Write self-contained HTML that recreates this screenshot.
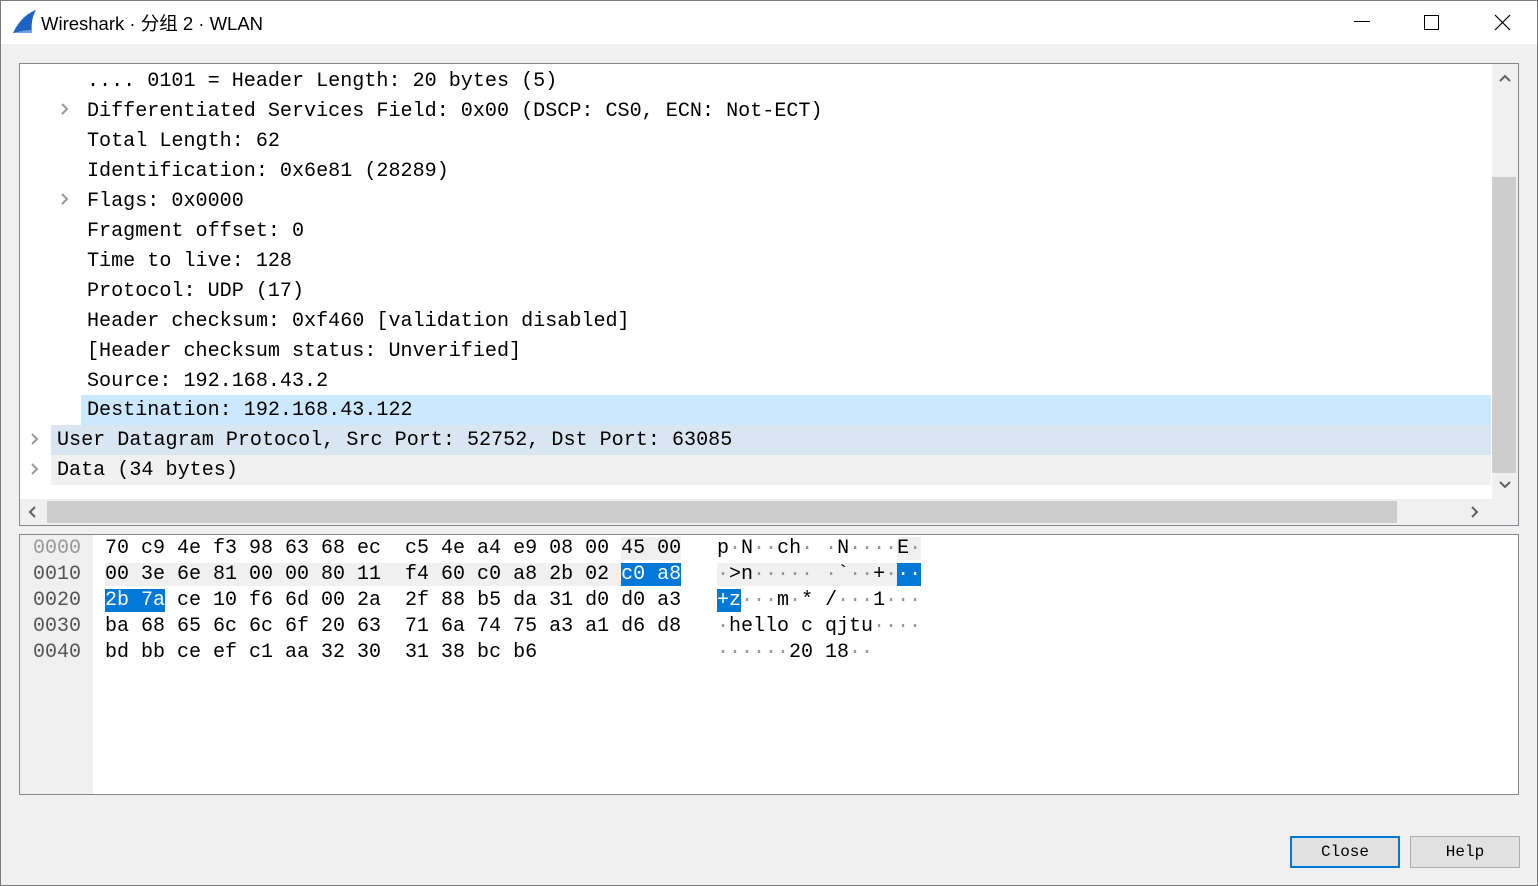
<!DOCTYPE html>
<html><head><meta charset="utf-8"><style>
*{margin:0;padding:0;box-sizing:border-box}
body{width:1538px;height:886px;background:#f0f0f0;position:relative;overflow:hidden;font-family:"Liberation Mono",monospace;box-shadow:inset 0 0 0 1px #7a7a7a}
.abs{position:absolute}
.title{left:1px;top:1px;width:1536px;height:43px;background:#fff}
.tt{left:41px;top:10px;font:18.5px "Liberation Sans","Noto Sans CJK SC",sans-serif;color:#000}
.tree{left:19px;top:63px;width:1500px;height:463px;background:#fff;border:1px solid #828790}
.ln{position:absolute;height:30px;line-height:30px;font-size:20.1px;white-space:pre;color:#000}
.hex{left:19px;top:534px;width:1500px;height:261px;background:#fff;border:1px solid #828790}
.hr{position:absolute;height:26px;line-height:26px;font-size:20px;white-space:pre}
.g{background:#f0f0f0}
.b{background:#0078d7;color:#fff}
.d{color:#999}
.btn{position:absolute;top:836px;width:110px;height:32px;background:#e1e1e1;border:1px solid #adadad;font:16px "Liberation Mono",monospace;text-align:center;line-height:30px;color:#000}
</style></head><body>
<div class="abs title"></div>
<svg class="abs" style="left:12px;top:9px" width="26" height="26" viewBox="0 0 26 26"><path d="M1 24 C6 14 13 5 24 1 C20 8 19 16 20 24 Z" fill="#1e62c4"/><path d="M1 24 L20 24 L20 21 C14 21 8 22 1 24Z" fill="#6fa0e0"/></svg>
<div class="abs tt">Wireshark · 分组 2 · WLAN</div>
<div class="abs" style="left:1354px;top:21px;width:16px;height:1px;background:#000"></div>
<div class="abs" style="left:1424px;top:15px;width:15px;height:15px;border:1px solid #000"></div>
<svg class="abs" style="left:1494px;top:14px" width="17" height="17"><path d="M1 1L16 16M16 1L1 16" stroke="#000" stroke-width="1.2"/></svg>

<div class="abs tree">
<div class="abs" style="left:61px;top:331px;width:1410px;height:30px;background:#cce8ff"></div>
<div class="abs" style="left:31px;top:361px;width:1440px;height:30px;background:#d9e5f0"></div>
<div class="abs" style="left:31px;top:391px;width:1440px;height:30px;background:#f0f0f0"></div>
<div class="ln" style="left:67px;top:3px">.... 0101 = Header Length: 20 bytes (5)</div>
<div class="ln" style="left:67px;top:33px">Differentiated Services Field: 0x00 (DSCP: CS0, ECN: Not-ECT)</div>
<div class="ln" style="left:67px;top:63px">Total Length: 62</div>
<div class="ln" style="left:67px;top:93px">Identification: 0x6e81 (28289)</div>
<div class="ln" style="left:67px;top:123px">Flags: 0x0000</div>
<div class="ln" style="left:67px;top:153px">Fragment offset: 0</div>
<div class="ln" style="left:67px;top:183px">Time to live: 128</div>
<div class="ln" style="left:67px;top:213px">Protocol: UDP (17)</div>
<div class="ln" style="left:67px;top:243px">Header checksum: 0xf460 [validation disabled]</div>
<div class="ln" style="left:67px;top:273px">[Header checksum status: Unverified]</div>
<div class="ln" style="left:67px;top:303px">Source: 192.168.43.2</div>
<div class="ln" style="left:67px;top:332px">Destination: 192.168.43.122</div>
<div class="ln" style="left:37px;top:362px">User Datagram Protocol, Src Port: 52752, Dst Port: 63085</div>
<div class="ln" style="left:37px;top:392px">Data (34 bytes)</div>
<svg class="abs" style="left:40px;top:38px" width="10" height="14"><path d="M2 2L7 7L2 12" stroke="#999" stroke-width="2" fill="none"/></svg>
<svg class="abs" style="left:40px;top:128px" width="10" height="14"><path d="M2 2L7 7L2 12" stroke="#999" stroke-width="2" fill="none"/></svg>
<svg class="abs" style="left:10px;top:368px" width="10" height="14"><path d="M2 2L7 7L2 12" stroke="#999" stroke-width="2" fill="none"/></svg>
<svg class="abs" style="left:10px;top:398px" width="10" height="14"><path d="M2 2L7 7L2 12" stroke="#999" stroke-width="2" fill="none"/></svg>
<div class="abs" style="left:1472px;top:0;width:26px;height:435px;background:#f0f0f0"></div>
<div class="abs" style="left:1472px;top:113px;width:24px;height:296px;background:#cdcdcd"></div>
<svg class="abs" style="left:1478px;top:9px" width="14" height="10"><path d="M2 8L7 3L12 8" stroke="#606060" stroke-width="2" fill="none"/></svg>
<svg class="abs" style="left:1478px;top:416px" width="14" height="10"><path d="M2 2L7 7L12 2" stroke="#606060" stroke-width="2" fill="none"/></svg>
<div class="abs" style="left:0;top:435px;width:1472px;height:26px;background:#f0f0f0"></div>
<div class="abs" style="left:27px;top:437px;width:1350px;height:22px;background:#cdcdcd"></div>
<svg class="abs" style="left:8px;top:441px" width="10" height="14"><path d="M7 2L2 7L7 12" stroke="#606060" stroke-width="2" fill="none"/></svg>
<svg class="abs" style="left:1450px;top:441px" width="10" height="14"><path d="M2 2L7 7L2 12" stroke="#606060" stroke-width="2" fill="none"/></svg>
<div class="abs" style="left:1472px;top:435px;width:26px;height:26px;background:#f0f0f0"></div>
</div>

<div class="abs hex">
<div class="abs" style="left:0;top:0;width:73px;height:259px;background:#f0f0f0"></div>
<div class="hr" style="left:13px;top:1px;color:#999">0000</div>
<div class="hr" style="left:13px;top:27px;color:#555">0010</div>
<div class="hr" style="left:13px;top:53px;color:#555">0020</div>
<div class="hr" style="left:13px;top:79px;color:#555">0030</div>
<div class="hr" style="left:13px;top:105px;color:#555">0040</div>
<div class="hr" style="left:85px;top:1px">70 c9 4e f3 98 63 68 ec  c5 4e a4 e9 08 00 <span class="g">45 00</span></div>
<div class="hr" style="left:85px;top:27px"><span class="g">00 3e 6e 81 00 00 80 11  f4 60 c0 a8 2b 02 </span><span class="b">c0 a8</span></div>
<div class="hr" style="left:85px;top:53px"><span class="b">2b 7a</span> ce 10 f6 6d 00 2a  2f 88 b5 da 31 d0 d0 a3</div>
<div class="hr" style="left:85px;top:79px">ba 68 65 6c 6c 6f 20 63  71 6a 74 75 a3 a1 d6 d8</div>
<div class="hr" style="left:85px;top:105px">bd bb ce ef c1 aa 32 30  31 38 bc b6</div>
<div class="hr" style="left:697px;top:1px">p<span class="d">·</span>N<span class="d">··</span>ch<span class="d">·</span> <span class="d">·</span>N<span class="d">····</span><span class="g">E<span class="d">·</span></span></div>
<div class="hr" style="left:697px;top:27px"><span class="g"><span class="d">·</span>&gt;n<span class="d">·····</span> <span class="d">·</span>`<span class="d">··</span>+<span class="d">·</span></span><span class="b">··</span></div>
<div class="hr" style="left:697px;top:53px"><span class="b">+z</span><span class="d">···</span>m<span class="d">·</span>* /<span class="d">···</span>1<span class="d">···</span></div>
<div class="hr" style="left:697px;top:79px"><span class="d">·</span>hello c qjtu<span class="d">····</span></div>
<div class="hr" style="left:697px;top:105px"><span class="d">······</span>20 18<span class="d">··</span></div>
</div>

<div class="btn" style="left:1290px;border:2px solid #0078d7;line-height:28px">Close</div>
<div class="btn" style="left:1410px">Help</div>
</body></html>
